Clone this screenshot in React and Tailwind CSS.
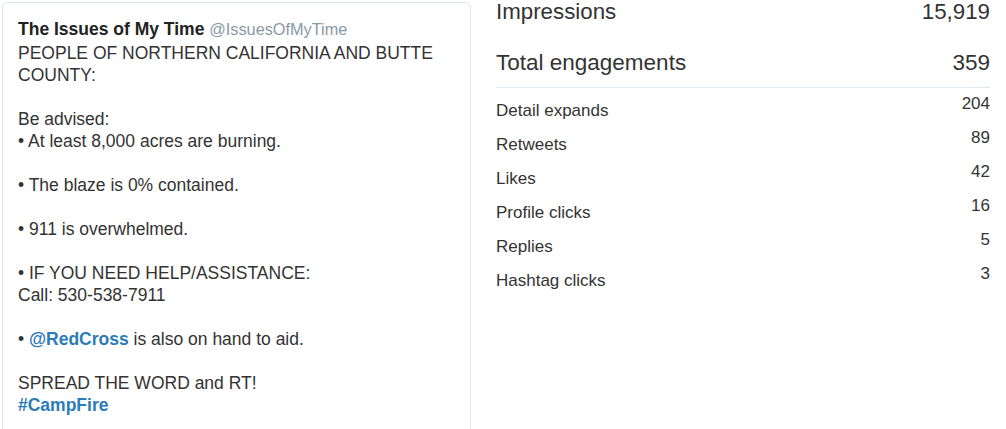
import React from 'react';

const stats = [
  { label: 'Detail expands', value: '204' },
  { label: 'Retweets', value: '89' },
  { label: 'Likes', value: '42' },
  { label: 'Profile clicks', value: '16' },
  { label: 'Replies', value: '5' },
  { label: 'Hashtag clicks', value: '3' },
];

const Tweet = () => (
  <div className="w-[469px] h-[440px] shrink-0 border border-[#e1e8ed] rounded-[5px] bg-white pl-[15px] pr-4 pt-[17px] text-[17.5px] leading-[22px] text-[#333]">
    <div className="leading-[19px] mb-[3px]">
      <span className="font-bold text-[#222]">The Issues of My Time</span>{' '}
      <span className="text-[16.3px] text-[#8899a6]">@IssuesOfMyTime</span>
    </div>
    <p>PEOPLE OF NORTHERN CALIFORNIA AND BUTTE COUNTY:</p>
    <p className="mt-[22px]">Be advised:</p>
    <p>• At least 8,000 acres are burning.</p>
    <p className="mt-[22px]">• The blaze is 0% contained.</p>
    <p className="mt-[22px]">• 911 is overwhelmed.</p>
    <p className="mt-[22px]">• IF YOU NEED HELP/ASSISTANCE:</p>
    <p>Call: 530-538-7911</p>
    <p className="mt-[22px]">
      • <span className="font-bold text-[#2b7bb9]">@RedCross</span> is also on hand to aid.
    </p>
    <p className="mt-[22px]">SPREAD THE WORD and RT!</p>
    <p className="font-bold text-[#2b7bb9]">#CampFire</p>
  </div>
);

const App = () => {
  return (
    <div className="w-[1006px] h-[429px] overflow-hidden bg-white font-['Liberation_Sans',Arial,sans-serif]">
      <div className="flex pl-[2px] pt-[2px]">
        <Tweet />
        <div className="ml-[25px] w-[494px] -mt-[2px] text-[#333]">
          <div className="flex justify-between text-[22.3px] leading-[24px]">
            <span>Impressions</span>
            <span>15,919</span>
          </div>
          <div className="flex justify-between text-[22.5px] leading-[24px] mt-[27px] pb-[12px] border-b border-[#e1e8ed]">
            <span>Total engagements</span>
            <span>359</span>
          </div>
          <div className="pt-[6px]">
            {stats.map((s) => (
              <div key={s.label} className="flex justify-between h-[34px] text-[17px] leading-[20px]">
                <span className="mt-[7px]">{s.label}</span>
                <span>{s.value}</span>
              </div>
            ))}
          </div>
        </div>
      </div>
    </div>
  );
};

export default App;
